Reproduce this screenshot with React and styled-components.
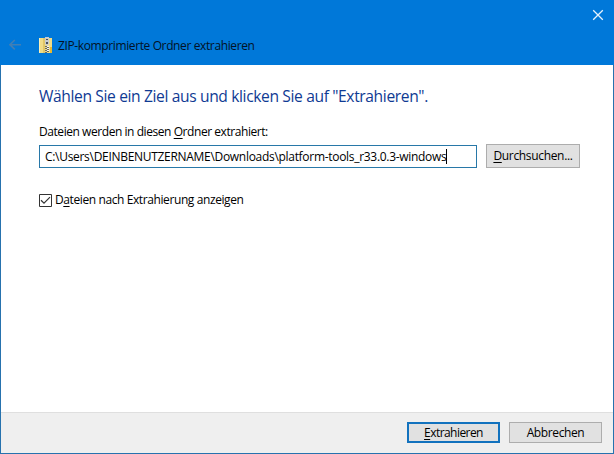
import React from "react";
import styled, { createGlobalStyle } from "styled-components";

const GlobalStyle = createGlobalStyle`
  * { box-sizing: border-box; }
  body { margin: 0; overflow: hidden; font-family: "Open Sans", "Noto Sans", sans-serif; font-size: 12px; line-height: 16px; color: #000; }
`;

const Dialog = styled.div`
  width: 614px;
  height: 454px;
  display: flex;
  flex-direction: column;
  background: #fff;
  border: 1px solid #2672ae;
  border-top: 0;
`;

const Header = styled.header`
  height: 65px;
  margin: 0 -1px;
  padding: 0 9px;
  flex: none;
  display: flex;
  flex-direction: column;
  background: #0078d9;
`;

const CaptionRow = styled.div`
  height: 36px;
  display: flex;
  justify-content: flex-end;
`;

const CloseButton = styled.button`
  width: 12px;
  height: 12px;
  margin: 9px 1px 0 0;
  padding: 0;
  border: 0;
  background: none;
  svg { display: block; }
`;

const TitleRow = styled.div`
  display: flex;
  height: 18px;
  align-items: center;
`;

const BackIcon = styled.svg`
  width: 12px;
  height: 12px;
  margin-right: 18px;
`;

const FolderIcon = styled.svg`
  width: 14px;
  height: 17px;
  margin-right: 5px;
`;

const Text = styled.span`
  white-space: nowrap;
  letter-spacing: ${(p) => p.$track || 0}px;
`;

const Title = styled(Text)`
  margin-top: 2px;
  color: #031226;
`;

const Key = styled.span`
  text-decoration: underline;
  text-underline-offset: 2px;
  text-decoration-thickness: 1px;
  text-decoration-skip-ink: none;
`;

const Content = styled.main`
  flex: 1;
  display: flex;
  flex-direction: column;
  align-items: flex-start;
  padding: 20px 33px 0 38px;
`;

const Heading = styled.h1`
  margin: 0 0 18px;
  font-size: 15.6px;
  line-height: 22px;
  font-weight: 400;
  color: #0f3a93;
  white-space: nowrap;
  letter-spacing: ${(p) => p.$track}px;
`;

const Label = styled.label`
  height: 16px;
  margin-top: -1px;
  white-space: nowrap;
`;

const PathRow = styled.div`
  display: flex;
  align-items: flex-start;
  gap: 9px;
  margin-top: 4px;
`;

const PathField = styled.div`
  display: flex;
  align-items: center;
  width: 438px;
  height: 23px;
  margin-top: 1px;
  padding-left: 5px;
  border: 1px solid #2878a8;
  background: #fff;
`;

const Caret = styled.span`
  width: 1px;
  height: 15px;
  background: #000;
`;

const Button = styled.button`
  display: flex;
  align-items: center;
  justify-content: center;
  width: ${(p) => p.$width}px;
  height: ${(p) => p.$height}px;
  padding: 0;
  font: inherit;
  color: #000;
  background: #e1e1e1;
  border: ${(p) => (p.$primary ? "2px solid #1272be" : "1px solid #adadad")};
`;

const CheckRow = styled.div`
  display: flex;
  align-items: center;
  height: 16px;
  margin-top: 24px;
`;

const CheckBox = styled.svg`
  width: 13px;
  height: 13px;
  margin-right: 3px;
`;

const Footer = styled.footer`
  flex: none;
  height: 41px;
  display: flex;
  justify-content: flex-end;
  gap: 9px;
  padding: 9px 11px 0 0;
  background: #efefef;
  border-top: 1px solid #dfdfdf;
`;

export default function App() {
  return (
    <>
      <GlobalStyle />
      <Dialog>
        <Header>
          <CaptionRow>
            <CloseButton aria-label="Schließen">
              <svg width="12" height="12" viewBox="0 0 12 12">
                <path d="M1.2 1.2 10.8 10.8M10.8 1.2 1.2 10.8" fill="none" stroke="#e6f2fc" strokeWidth="1.3" />
              </svg>
            </CloseButton>
          </CaptionRow>
          <TitleRow>
            <BackIcon viewBox="0 0 12 12">
              <path d="M5.8 1 .9 5.7 5.8 10.4M1 5.7h11" fill="none" stroke="#417fb5" strokeWidth="1.6" />
            </BackIcon>
            <FolderIcon viewBox="0 0 14 17">
              <path d="M0 1h13v15H0z" fill="#f0dc87" />
              <path d="M0 1h1v15H0z" fill="#f9efb7" />
              <path d="M4 1h2v15H4z" fill="#e1c768" />
              <path d="M11 10h2v6h-2z" fill="#e9b82e" />
              <path d="M6 0h4v7L8 9 6 7z" fill="#c6cbd0" />
              <path d="M7 2h2v1H7zM7 5h2v2H7z" fill="#48515b" />
              <path d="M6 9h2v1H6zM8 10h2v1H8zM6 11h2v1H6zM8 12h2v1H8zM6 13h2v1H6zM8 14h2v1H8zM6 15h2v1H6z" fill="#65686a" />
              <path d="M8 9h2v1H8zM8 11h2v1H8zM8 13h2v1H8z" fill="#f8f7ea" />
            </FolderIcon>
            <Title $track={-0.38}>ZIP-komprimierte Ordner extrahieren</Title>
          </TitleRow>
        </Header>
        <Content>
          <Heading $track={-0.37}>Wählen Sie ein Ziel aus und klicken Sie auf "Extrahieren".</Heading>
          <Label><Text $track={-0.44}>Dateien werden in diesen <Key>O</Key>rdner extrahiert:</Text></Label>
          <PathRow>
            <PathField>
              <Text $track={-0.3}>C:\Users\DEINBENUTZERNAME\Downloads\platform-tools_r33.0.3-windows</Text>
              <Caret />
            </PathField>
            <Button $width={94} $height={24}><Text $track={-0.33}><Key>D</Key>urchsuchen...</Text></Button>
          </PathRow>
          <CheckRow>
            <CheckBox viewBox="0 0 13 13">
              <path d="M.5.5h12v12H.5z" fill="#fff" stroke="#333" />
              <path d="M2 6.3 5 9.2 11 3.2" fill="none" stroke="#333" strokeWidth="1.2" />
            </CheckBox>
            <Text $track={-0.4}>D<Key>a</Key>teien nach Extrahierung anzeigen</Text>
          </CheckRow>
        </Content>
        <Footer>
          <Button $primary $width={93} $height={21}><Text $track={-0.55}><Key>E</Key>xtrahieren</Text></Button>
          <Button $width={93} $height={21}><Text $track={-0.38}>Abbrechen</Text></Button>
        </Footer>
      </Dialog>
    </>
  );
}
